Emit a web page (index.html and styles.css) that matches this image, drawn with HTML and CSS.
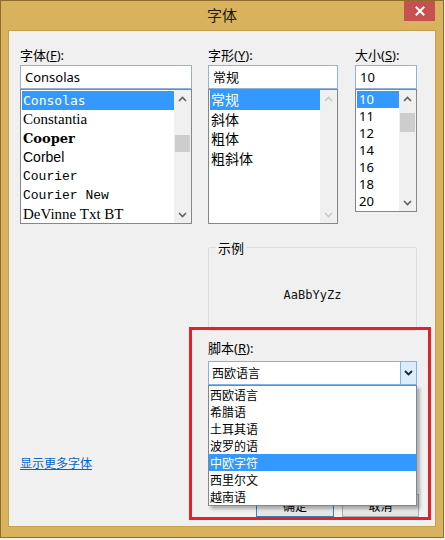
FILE: index.html
```html
<!DOCTYPE html>
<html lang="zh-CN">
<head>
    <meta charset="UTF-8">
    <title>字体</title>
    <link rel="stylesheet" href="styles.css">
</head>
<body>
    <div class="window">
        <div class="titlebar">
            <span class="title">字体</span>
            <span class="close">
                <svg width="10" height="10" viewBox="0 0 10 10"><path d="M1.5 1.5 L8.5 8.5 M8.5 1.5 L1.5 8.5" stroke="#fff" stroke-width="2" stroke-linecap="square"/></svg>
            </span>
        </div>

        <div class="client">
            <div class="pickers">
                <!-- fonte -->
                <div class="picker picker-font">
                    <div class="lbl">字体(<u>F</u>):</div>
                    <div class="field">Consolas</div>
                    <div class="list list-font">
                        <ul class="items">
                            <li class="sel f-consolas">Consolas</li>
                            <li class="f-constantia">Constantia</li>
                            <li class="f-cooper">Cooper</li>
                            <li class="f-corbel">Corbel</li>
                            <li class="f-courier">Courier</li>
                            <li class="f-courier">Courier New</li>
                            <li class="f-devinne">DeVinne Txt BT</li>
                        </ul>
                        <div class="scrollbar">
                            <span class="arrow"><svg width="9" height="6" viewBox="0 0 9 6"><path d="M1 5 L4.5 1.5 L8 5" fill="none" stroke="#606060" stroke-width="1.6"/></svg></span>
                            <span class="track"><span class="thumb thumb-font"></span></span>
                            <span class="arrow"><svg width="9" height="6" viewBox="0 0 9 6"><path d="M1 1 L4.5 4.5 L8 1" fill="none" stroke="#606060" stroke-width="1.6"/></svg></span>
                        </div>
                    </div>
                </div>

                <!-- estilo -->
                <div class="picker picker-style">
                    <div class="lbl">字形(<u>Y</u>):</div>
                    <div class="field">常规</div>
                    <div class="list list-style">
                        <ul class="items">
                            <li class="sel">常规</li>
                            <li>斜体</li>
                            <li>粗体</li>
                            <li>粗斜体</li>
                        </ul>
                        <div class="scrollbar">
                            <span class="arrow"><svg width="9" height="6" viewBox="0 0 9 6"><path d="M1 5 L4.5 1.5 L8 5" fill="none" stroke="#c8c8c8" stroke-width="1.6"/></svg></span>
                            <span class="track"></span>
                            <span class="arrow"><svg width="9" height="6" viewBox="0 0 9 6"><path d="M1 1 L4.5 4.5 L8 1" fill="none" stroke="#c8c8c8" stroke-width="1.6"/></svg></span>
                        </div>
                    </div>
                </div>

                <!-- tamanho -->
                <div class="picker picker-size">
                    <div class="lbl">大小(<u>S</u>):</div>
                    <div class="field">10</div>
                    <div class="list list-size">
                        <ul class="items">
                            <li class="sel">10</li>
                            <li>11</li>
                            <li>12</li>
                            <li>14</li>
                            <li>16</li>
                            <li>18</li>
                            <li>20</li>
                        </ul>
                        <div class="scrollbar">
                            <span class="arrow"><svg width="9" height="6" viewBox="0 0 9 6"><path d="M1 5 L4.5 1.5 L8 5" fill="none" stroke="#606060" stroke-width="1.6"/></svg></span>
                            <span class="track"><span class="thumb thumb-size"></span></span>
                            <span class="arrow"><svg width="9" height="6" viewBox="0 0 9 6"><path d="M1 1 L4.5 4.5 L8 1" fill="none" stroke="#606060" stroke-width="1.6"/></svg></span>
                        </div>
                    </div>
                </div>
            </div>

            <div class="preview">
                <fieldset class="sample">
                    <legend>示例</legend>
                    <div class="sample-text">AaBbYyZz</div>
                </fieldset>

                <div class="lbl lbl-script">脚本(<u>R</u>):</div>
                <div class="combo">
                    <span class="combo-value">西欧语言</span>
                    <span class="combo-btn"><svg width="9" height="6" viewBox="0 0 9 6"><path d="M1 1 L4.5 4.5 L8 1" fill="none" stroke="#222" stroke-width="1.8"/></svg></span>
                    <ul class="dropdown">
                        <li>西欧语言</li>
                        <li>希腊语</li>
                        <li>土耳其语</li>
                        <li>波罗的语</li>
                        <li class="sel">中欧字符</li>
                        <li>西里尔文</li>
                        <li>越南语</li>
                    </ul>
                </div>
            </div>

            <div class="more-row"><a class="more">显示更多字体</a></div>

            <div class="buttons">
                <button class="btn btn-ok">确定</button>
                <button class="btn btn-cancel">取消</button>
            </div>

            <div class="mark"></div>
        </div>
    </div>
</body>
</html>
```

FILE: styles.css
```css
* {
    margin: 0;
    padding: 0;
    box-sizing: border-box;
}

body {
    background: #f4f1ea;
    font-family: "Noto Sans", "Noto Sans CJK SC", sans-serif;
    font-size: 13px;
    color: #000;
}

.window {
    width: 444px;
    height: 538px;
    background: #d8b25d;
    border: 1px solid #8f6d2c;
}

.titlebar {
    height: 29px;
    display: grid;
    grid-template-columns: 1fr auto 1fr;
}

.title {
    grid-column: 2;
    font-family: "Noto Sans CJK SC", sans-serif;
    font-size: 15px;
    line-height: 27px;
    color: #1a1a1a;
}

.close {
    grid-column: 3;
    justify-self: end;
    width: 31px;
    height: 20px;
    margin-right: 8px;
    background: #c75050;
    display: flex;
    align-items: center;
    justify-content: center;
}

.client {
    position: relative;
    margin: 0 7px;
    height: 497px;
    background: #f0f0f0;
    border: 1px solid #c4a04f;
    padding: 17px 0 0 11px;
}

/* listas de cima */
.pickers {
    display: flex;
}

.picker-font {
    width: 172px;
    margin-right: 16px;
}

.picker-style {
    width: 130px;
    margin-right: 17px;
}

.picker-size {
    width: 62px;
}

.lbl {
    height: 15px;
    line-height: 15px;
    margin-bottom: 2px;
    font-family: "Noto Sans", "Noto Sans CJK SC", sans-serif;
    font-size: 13px;
    white-space: nowrap;
}

.field {
    height: 24px;
    background: #fff;
    border: 1px solid #8fb3d9;
    padding: 0 4px;
    line-height: 22px;
    font-size: 13px;
}

.list {
    display: flex;
    background: #fff;
    border: 1px solid #828790;
    padding-left: 1px;
}

.list-font, .list-style {
    height: 135px;
}

.list-size {
    height: 123px;
}

.items {
    flex: 1;
    list-style: none;
}

.list-font .items {
    padding-top: 1px;
}

.items li {
    height: 19px;
    line-height: 19px;
    padding-left: 1px;
    white-space: nowrap;
    overflow: hidden;
}

.list-style .items li {
    font-size: 14px;
    height: 19.5px;
    line-height: 19.5px;
}

.list-size .items {
    padding-top: 1px;
}

.list-size .items li {
    height: 17px;
    line-height: 17px;
    font-size: 13px;
    padding-left: 2px;
}

.sel {
    background: #3399ff;
    color: #fff;
}

.f-consolas {
    font-family: "DejaVu Sans Mono", monospace;
    font-size: 13px;
}

.f-constantia {
    font-family: "Liberation Serif", serif;
    font-size: 15px;
}

.f-cooper {
    font-family: "DejaVu Serif", serif;
    font-weight: bold;
    font-size: 13px;
}

.f-corbel {
    font-family: "Liberation Sans", sans-serif;
    font-size: 14px;
}

.f-courier {
    font-family: "Liberation Mono", monospace;
    font-size: 13px;
}

.f-devinne {
    font-family: "Liberation Serif", serif;
    font-size: 15px;
}

.scrollbar {
    width: 17px;
    background: #f0f0f0;
    display: flex;
    flex-direction: column;
}

.arrow {
    height: 17px;
    display: flex;
    align-items: center;
    justify-content: center;
}

.track {
    flex: 1;
}

.thumb {
    display: block;
    margin: 0 1px;
    background: #cdcdcd;
}

.thumb-font {
    margin-top: 28px;
    height: 17px;
}

.thumb-size {
    margin-top: 6px;
    height: 19px;
}

/* exemplo e script */
.preview {
    margin: 15px 0 0 188px;
    width: 209px;
}

.sample {
    height: 92px;
    border: 1px solid #dcdcdc;
    border-radius: 2px;
}

.sample legend {
    margin-left: 7px;
    padding: 0 2px;
    line-height: 17px;
    font-family: "Noto Sans CJK SC", sans-serif;
    font-size: 13px;
}

.sample-text {
    padding-top: 31px;
    text-align: center;
    font-family: "DejaVu Sans Mono", monospace;
    font-size: 12px;
    line-height: 16px;
    color: #111;
}

.lbl-script {
    margin: 10px 0 5px;
}

.combo {
    position: relative;
    display: flex;
    height: 24px;
    background: #fff;
    border: 1px solid #7eb4ea;
    font-family: "Noto Sans CJK SC", sans-serif;
    font-size: 12px;
}

.combo-value {
    flex: 1;
    padding-left: 3px;
    line-height: 22px;
}

.combo-btn {
    width: 16px;
    background: #dcecfc;
    border-left: 1px solid #7eb4ea;
    display: flex;
    align-items: center;
    justify-content: center;
}

.dropdown {
    position: absolute;
    left: -1px;
    right: -1px;
    top: 23px;
    z-index: 2;
    list-style: none;
    background: #fff;
    border: 1px solid #7c8896;
    box-shadow: 3px 3px 3px rgba(0, 0, 0, 0.28);
}

.dropdown li {
    height: 17px;
    line-height: 17px;
    padding-left: 1px;
}

/* rodapé */
.more-row {
    margin-top: 69px;
    height: 15px;
}

.more {
    font-family: "Noto Sans CJK SC", sans-serif;
    font-size: 12px;
    line-height: 15px;
    color: #0066cc;
    text-decoration: underline;
}

.buttons {
    display: flex;
    gap: 8px;
    margin: 25px 0 0 236px;
}

.btn {
    height: 23px;
    background: linear-gradient(#f2f2f2, #e3e3e3);
    border: 1px solid #acacac;
    font-family: "Noto Sans CJK SC", sans-serif;
    font-size: 12px;
    color: #000;
}

.btn-ok {
    width: 78px;
    border-color: #3c7fb1;
}

.btn-cancel {
    width: 77px;
}

.mark {
    position: absolute;
    left: 180px;
    top: 296px;
    width: 242px;
    height: 193px;
    border: 3px solid #e22129;
    z-index: 3;
}
```
